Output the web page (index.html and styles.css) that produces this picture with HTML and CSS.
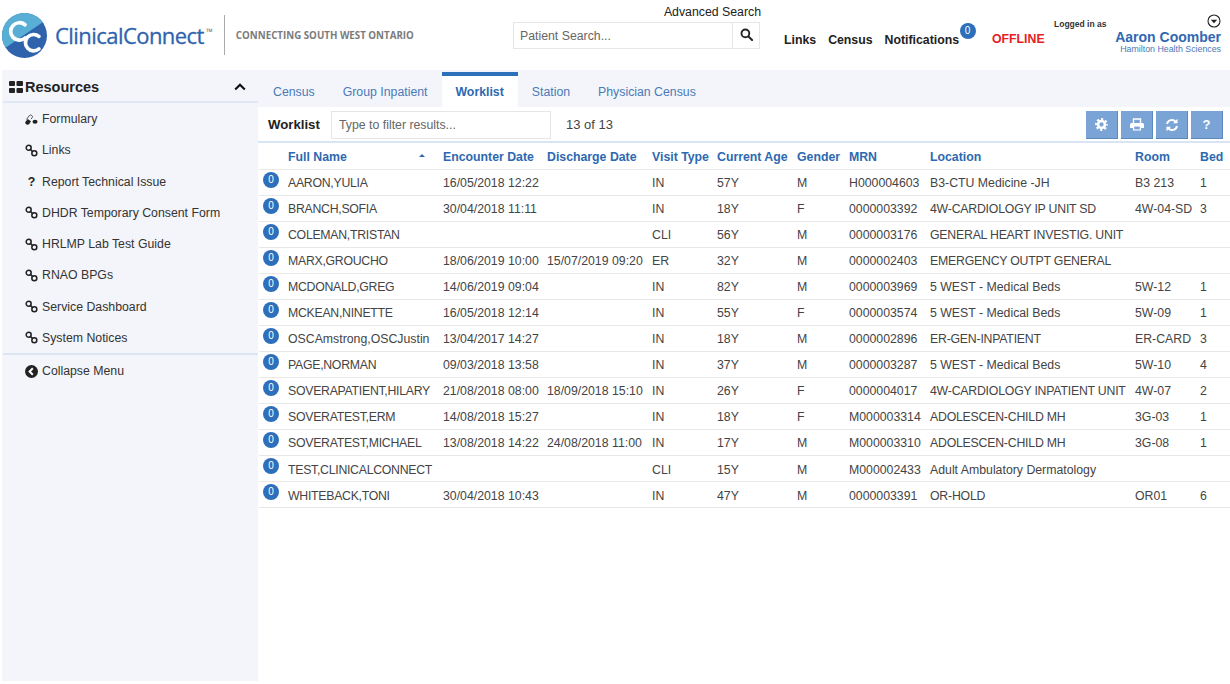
FILE: index.html
```html
<!DOCTYPE html>
<html lang="en">
<head>
    <meta charset="UTF-8">
    <title>ClinicalConnect - Worklist</title>
    <link rel="stylesheet" href="styles.css">
</head>
<body>

<svg class="icon-defs" width="0" height="0">
    <symbol id="i-link" viewBox="0 0 12 12">
        <circle cx="3.4" cy="3.4" r="2.3" fill="none" stroke="currentColor" stroke-width="1.4"/>
        <circle cx="8.6" cy="8.6" r="2.3" fill="none" stroke="currentColor" stroke-width="1.4"/>
        <path d="M4.6 4.6l2.8 2.8" stroke="currentColor" stroke-width="1.4"/>
    </symbol>
</svg>

<header class="top">
    <div class="brand">
        <svg class="logo" viewBox="0 0 44 44" width="45" height="45">
            <defs><clipPath id="logoClip"><circle cx="22" cy="22" r="22"/></clipPath></defs>
            <g clip-path="url(#logoClip)">
                <rect width="44" height="44" fill="#2f64ad"/>
                <path d="M0 0H44V6L2 35H0Z" fill="#58aed4"/>
            </g>
            <path d="M22.5 11.5A8.5 8.5 0 1 0 22.5 24.5" fill="none" stroke="#fff" stroke-width="3.6" stroke-linecap="round"/>
            <path d="M36.100 22.900A8 8 0 1 0 36.100 35.100" fill="none" stroke="#fff" stroke-width="3.6" stroke-linecap="round"/>
        </svg>
        <span class="brand-name">ClinicalConnect<sup>™</sup></span>
        <span class="brand-tag">CONNECTING SOUTH WEST ONTARIO</span>
    </div>
    <div class="search">
        <a class="adv-link">Advanced Search</a>
        <div class="search-row">
            <input class="search-box" type="text" placeholder="Patient Search...">
            <button class="search-btn">
                <svg viewBox="0 0 14 14" width="13" height="13"><circle cx="5.800" cy="5.800" r="4.200" fill="none" stroke="#222" stroke-width="2"/><path d="M9 9l4 4" stroke="#222" stroke-width="2.200" stroke-linecap="round"/></svg>
            </button>
        </div>
    </div>
    <nav class="top-nav">
        <a>Links</a>
        <a>Census</a>
        <a class="notif">Notifications<span class="badge badge-top">0</span></a>
    </nav>
    <div class="offline">OFFLINE</div>
    <div class="user">
        <div class="user-line">
            <span class="logged">Logged in as</span>
            <svg class="user-caret" viewBox="0 0 14 14" width="14" height="14"><circle cx="7" cy="7" r="6" fill="none" stroke="#222" stroke-width="1.100"/><path d="M3.800 5.800h6.400L7 9.200z" fill="#222"/></svg>
        </div>
        <div class="user-name">Aaron Coomber</div>
        <div class="user-org">Hamilton Health Sciences</div>
    </div>
</header>

<div class="layout">
    <aside class="sidebar">
        <div class="side-head">
            <svg viewBox="0 0 14 12" width="14" height="12"><path fill="#222" d="M0 1a1 1 0 0 1 1-1h4a1 1 0 0 1 1 1v3a1 1 0 0 1-1 1H1a1 1 0 0 1-1-1zM7.500 1a1 1 0 0 1 1-1H13a1 1 0 0 1 1 1v3a1 1 0 0 1-1 1H8.500a1 1 0 0 1-1-1zM0 8a1 1 0 0 1 1-1h4a1 1 0 0 1 1 1v3a1 1 0 0 1-1 1H1a1 1 0 0 1-1-1zM7.500 8a1 1 0 0 1 1-1H13a1 1 0 0 1 1 1v3a1 1 0 0 1-1 1H8.500a1 1 0 0 1-1-1z"/></svg>
            <span class="side-title">Resources</span>
            <svg class="side-chevron" viewBox="0 0 12 8" width="12" height="8"><path d="M1.200 6.500L6 1.800l4.800 4.700" fill="none" stroke="#111" stroke-width="2.200"/></svg>
        </div>
        <ul class="side-menu">
            <li><svg class="side-icon" viewBox="0 0 14 12"><path d="M1.500 6L4.700 1.800a1.900 1.900 0 0 1 3 2.300L6.500 5.500" fill="none" stroke="#333" stroke-width=".9"/><path d="M.3 8.600L3 5.500 6.400 8 4.800 10.500a2.500 2.500 0 0 1-4.500-1.900z" fill="#222"/><ellipse cx="10.800" cy="8.400" rx="2.700" ry="2.200" fill="#222"/></svg>Formulary</li>
            <li><svg class="side-icon"><use href="#i-link"/></svg>Links</li>
            <li><span class="side-q">?</span>Report Technical Issue</li>
            <li><svg class="side-icon"><use href="#i-link"/></svg>DHDR Temporary Consent Form</li>
            <li><svg class="side-icon"><use href="#i-link"/></svg>HRLMP Lab Test Guide</li>
            <li><svg class="side-icon"><use href="#i-link"/></svg>RNAO BPGs</li>
            <li><svg class="side-icon"><use href="#i-link"/></svg>Service Dashboard</li>
            <li><svg class="side-icon"><use href="#i-link"/></svg>System Notices</li>
        </ul>
        <div class="side-collapse">
            <svg class="side-icon" viewBox="0 0 13 13"><circle cx="6.500" cy="6.500" r="6.500" fill="#222"/><path d="M7.800 3.300L4.600 6.500l3.200 3.200" fill="none" stroke="#fff" stroke-width="2"/></svg>Collapse Menu
        </div>
    </aside>

    <main class="content">
        <div class="tabs">
            <a class="tab">Census</a>
            <a class="tab">Group Inpatient</a>
            <a class="tab active">Worklist</a>
            <a class="tab">Station</a>
            <a class="tab">Physician Census</a>
        </div>
        <div class="toolbar">
            <strong class="toolbar-title">Worklist</strong>
            <input class="filter" type="text" placeholder="Type to filter results...">
            <span class="count">13 of 13</span>
            <div class="tool-btns">
                <button class="tool-btn"><svg viewBox="0 0 14 14" width="13" height="13"><circle cx="7" cy="7" r="3.700" fill="none" stroke="#fff" stroke-width="2.800"/><circle cx="7" cy="7" r="5.700" fill="none" stroke="#fff" stroke-width="2.400" stroke-dasharray="2.300 2.180" stroke-dashoffset="1.150"/></svg></button>
                <button class="tool-btn"><svg viewBox="0 0 14 13" width="14" height="13"><path d="M3.500 5V1h7v4" fill="none" stroke="#fff" stroke-width="1.400"/><path d="M1.500 5h11A1.500 1.500 0 0 1 14 6.500V10h-3v2.500H3V10H0V6.500A1.500 1.500 0 0 1 1.500 5z" fill="#fff"/><rect x="4.200" y="8.600" width="5.600" height="2.800" fill="#7aa4d6"/></svg></button>
                <button class="tool-btn"><svg viewBox="0 0 14 14" width="14" height="14"><path d="M2 6a5 5 0 0 1 8.600-2.400" fill="none" stroke="#fff" stroke-width="2"/><path d="M12.500.8v4.500H8z" fill="#fff"/><path d="M12 8a5 5 0 0 1-8.600 2.400" fill="none" stroke="#fff" stroke-width="2"/><path d="M1.500 13.200V8.700H6z" fill="#fff"/></svg></button>
                <button class="tool-btn tool-q">?</button>
            </div>
        </div>
        <table class="worklist">
            <colgroup>
                <col class="c-badge"><col class="c-name"><col class="c-enc"><col class="c-dis"><col class="c-visit"><col class="c-age"><col class="c-gender"><col class="c-mrn"><col class="c-loc"><col class="c-room"><col class="c-bed">
            </colgroup>
            <thead>
                <tr>
                    <th></th>
                    <th class="sorted">Full Name<span class="sort-mark"></span></th>
                    <th>Encounter Date</th>
                    <th>Discharge Date</th>
                    <th>Visit Type</th>
                    <th>Current Age</th>
                    <th>Gender</th>
                    <th>MRN</th>
                    <th>Location</th>
                    <th>Room</th>
                    <th>Bed</th>
                </tr>
            </thead>
            <tbody>
                <tr><td><span class="badge">0</span></td><td class="name">AARON,YULIA</td><td>16/05/2018 12:22</td><td></td><td>IN</td><td>57Y</td><td>M</td><td>H000004603</td><td>B3-CTU Medicine -JH</td><td>B3 213</td><td>1</td></tr>
                <tr><td><span class="badge">0</span></td><td class="name">BRANCH,SOFIA</td><td>30/04/2018 11:11</td><td></td><td>IN</td><td>18Y</td><td>F</td><td>0000003392</td><td class="caps">4W-CARDIOLOGY IP UNIT SD</td><td>4W-04-SD</td><td>3</td></tr>
                <tr><td><span class="badge">0</span></td><td class="name">COLEMAN,TRISTAN</td><td></td><td></td><td>CLI</td><td>56Y</td><td>M</td><td>0000003176</td><td class="caps">GENERAL HEART INVESTIG. UNIT</td><td></td><td></td></tr>
                <tr><td><span class="badge">0</span></td><td class="name">MARX,GROUCHO</td><td>18/06/2019 10:00</td><td>15/07/2019 09:20</td><td>ER</td><td>32Y</td><td>M</td><td>0000002403</td><td class="caps">EMERGENCY OUTPT GENERAL</td><td></td><td></td></tr>
                <tr><td><span class="badge">0</span></td><td class="name">MCDONALD,GREG</td><td>14/06/2019 09:04</td><td></td><td>IN</td><td>82Y</td><td>M</td><td>0000003969</td><td>5 WEST - Medical Beds</td><td>5W-12</td><td>1</td></tr>
                <tr><td><span class="badge">0</span></td><td class="name">MCKEAN,NINETTE</td><td>16/05/2018 12:14</td><td></td><td>IN</td><td>55Y</td><td>F</td><td>0000003574</td><td>5 WEST - Medical Beds</td><td>5W-09</td><td>1</td></tr>
                <tr><td><span class="badge">0</span></td><td>OSCAmstrong,OSCJustin</td><td>13/04/2017 14:27</td><td></td><td>IN</td><td>18Y</td><td>M</td><td>0000002896</td><td class="caps">ER-GEN-INPATIENT</td><td>ER-CARD</td><td>3</td></tr>
                <tr><td><span class="badge">0</span></td><td class="name">PAGE,NORMAN</td><td>09/03/2018 13:58</td><td></td><td>IN</td><td>37Y</td><td>M</td><td>0000003287</td><td>5 WEST - Medical Beds</td><td>5W-10</td><td>4</td></tr>
                <tr><td><span class="badge">0</span></td><td class="name">SOVERAPATIENT,HILARY</td><td>21/08/2018 08:00</td><td>18/09/2018 15:10</td><td>IN</td><td>26Y</td><td>F</td><td>0000004017</td><td class="caps">4W-CARDIOLOGY INPATIENT UNIT</td><td>4W-07</td><td>2</td></tr>
                <tr><td><span class="badge">0</span></td><td class="name">SOVERATEST,ERM</td><td>14/08/2018 15:27</td><td></td><td>IN</td><td>18Y</td><td>F</td><td>M000003314</td><td class="caps">ADOLESCEN-CHILD MH</td><td>3G-03</td><td>1</td></tr>
                <tr><td><span class="badge">0</span></td><td class="name">SOVERATEST,MICHAEL</td><td>13/08/2018 14:22</td><td>24/08/2018 11:00</td><td>IN</td><td>17Y</td><td>M</td><td>M000003310</td><td class="caps">ADOLESCEN-CHILD MH</td><td>3G-08</td><td>1</td></tr>
                <tr><td><span class="badge">0</span></td><td class="name">TEST,CLINICALCONNECT</td><td></td><td></td><td>CLI</td><td>15Y</td><td>M</td><td>M000002433</td><td>Adult Ambulatory Dermatology</td><td></td><td></td></tr>
                <tr><td><span class="badge">0</span></td><td class="name">WHITEBACK,TONI</td><td>30/04/2018 10:43</td><td></td><td>IN</td><td>47Y</td><td>M</td><td>0000003391</td><td class="caps">OR-HOLD</td><td>OR01</td><td>6</td></tr>
            </tbody>
        </table>
    </main>
</div>

</body>
</html>
```

FILE: styles.css
```css
* {
    box-sizing: border-box;
}
html, body {
    height: 100%;
}
body {
    margin: 0;
    font-family: "Liberation Sans", Arial, sans-serif;
    font-size: 12.3px;
    color: #444;
    background: #fff;
    overflow: hidden;
}
.icon-defs {
    position: absolute;
}

/* top bar */
.top {
    display: flex;
    height: 70px;
    color: #222;
}
.brand {
    display: flex;
    align-items: center;
    width: 513px;
    padding: 0 0 0 2px;
}
.logo {
    flex: none;
}
.brand-name {
    margin-left: 8px;
    font-family: "Open Sans", sans-serif;
    font-size: 22px;
    letter-spacing: -0.55px;
    -webkit-text-stroke: 0.3px #2f63ad;
    color: #2f63ad;
    white-space: nowrap;
}
.brand-name sup {
    margin-left: 2px;
    font-size: 9px;
    font-weight: 700;
    letter-spacing: 0;
    -webkit-text-stroke: 0;
    vertical-align: 9px;
    color: #777;
}
.brand-tag {
    margin-left: 11px;
    padding: 10px 0 10px 11px;
    border-left: 1px solid #aaa;
    font-family: "Open Sans", sans-serif;
    font-size: 9.75px;
    font-weight: 700;
    color: #7b7b7b;
    white-space: nowrap;
    height: 40px;
    line-height: 22px;
}
.search {
    width: 248px;
    padding-top: 5px;
    text-align: right;
}
.adv-link {
    display: block;
    font-size: 12.3px;
    line-height: 15px;
}
.search-row {
    display: flex;
    margin-top: 2px;
    height: 27px;
}
.search-box {
    width: 220px;
    height: 27px;
    border: 1px solid #e6e6e6;
    padding: 0 6px;
    font: 12.3px "Liberation Sans", Arial, sans-serif;
}
.search-box::placeholder, .filter::placeholder {
    color: #666;
}
.search-btn {
    width: 27px;
    border: 1px solid #e6e6e6;
    border-left: none;
    background: #fff;
    padding: 0;
}
.top-nav {
    display: flex;
    gap: 12px;
    margin-left: 23px;
    padding-top: 33px;
    font-weight: bold;
    font-size: 12.3px;
    width: 208px;
    flex: none;
    white-space: nowrap;
}
.notif {
    position: relative;
}
.badge {
    display: inline-block;
    width: 16px;
    height: 16px;
    border-radius: 50%;
    background: #2d6fba;
    color: #fff;
    font-size: 10px;
    font-weight: normal;
    line-height: 15px;
    text-align: center;
}
.badge-top {
    position: absolute;
    left: 75px;
    top: -10px;
}
.offline {
    width: 62px;
    padding-top: 32px;
    font-weight: bold;
    font-size: 12.3px;
    color: #e8201f;
    flex: none;
}
.user {
    flex: 1;
    padding: 14px 9px 0 0;
    text-align: right;
}
.user-line {
    display: flex;
    justify-content: space-between;
    align-items: flex-start;
    height: 16px;
}
.logged {
    font-size: 8.5px;
    font-weight: bold;
    color: #333;
    padding-top: 5px;
}
.user-name {
    font-size: 14px;
    font-weight: bold;
    color: #2f68b2;
    line-height: 14px;
    white-space: nowrap;
}
.user-org {
    font-size: 8.8px;
    color: #4a78b8;
    line-height: 11px;
    white-space: nowrap;
}

/* sidebar */
.layout {
    display: flex;
    height: 611px;
    padding-left: 2px;
}
.sidebar {
    width: 256px;
    flex: none;
    padding-left: 1px;
    background: #f3f5fa;
    color: #333;
}
.side-head {
    display: flex;
    align-items: center;
    height: 33px;
    padding: 3px 12px 0 6px;
    border-bottom: 2px solid #dfe8f3;
    color: #222;
}
.side-title {
    margin-left: 2px;
    font-size: 14.5px;
    font-weight: bold;
    flex: 1;
}
.side-menu {
    list-style: none;
    margin: 0;
    padding: 0.4px 0 0;
    border-bottom: 2px solid #dbe6f2;
}
.side-menu li {
    display: flex;
    align-items: center;
    height: 31.25px;
    padding-left: 22px;
}
.side-icon {
    width: 13px;
    height: 13px;
    margin-right: 4px;
    flex: none;
    color: #222;
}
.side-q {
    width: 13px;
    margin-right: 4px;
    text-align: center;
    font-weight: bold;
    color: #222;
}
.side-collapse {
    display: flex;
    align-items: center;
    height: 32px;
    padding-left: 22px;
}

/* main column */
.content {
    flex: 1;
    min-width: 0;
}
.tabs {
    display: flex;
    height: 37px;
    padding: 2px 0 0 1px;
    background: #f3f5fa;
}
.tab {
    padding: 0 14px;
    line-height: 40px;
    font-size: 12.3px;
    color: #4a7ab8;
    white-space: nowrap;
}
.tab.active {
    line-height: 32px;
    margin-left: 1px;
    padding-left: 13px;
    background: #fff;
    border-top: 4px solid #2d6fba;
    font-weight: bold;
    color: #2d69b0;
}
.toolbar {
    display: flex;
    align-items: center;
    height: 36px;
    border-bottom: 2px solid #d9e5f3;
    padding: 2px 7px 0 10px;
}
.toolbar-title {
    margin-bottom: 2px;
    font-size: 13.2px;
    color: #222;
    width: 63px;
}
.filter {
    width: 220px;
    height: 28px;
    border: 1px solid #e6e6e6;
    padding: 0 7px;
    font: 12.3px "Liberation Sans", Arial, sans-serif;
}
.count {
    margin: 0 0 2px 15px;
    font-size: 13px;
}
.tool-btns {
    display: flex;
    gap: 3px;
    margin-left: auto;
}
.tool-btn {
    display: flex;
    align-items: center;
    justify-content: center;
    width: 32px;
    height: 28px;
    padding: 0;
    border: none;
    border-right: 1px solid #5d88bd;
    border-bottom: 1px solid #5d88bd;
    background: #7aa4d6;
    color: #fff;
}
.tool-q {
    font: bold 13px "Liberation Sans", Arial, sans-serif;
}

/* table */
.worklist {
    width: 972px;
    margin-left: 1px;
    table-layout: fixed;
    border-collapse: collapse;
    white-space: nowrap;
}
.c-badge { width: 25px; }
.c-name { width: 155px; }
.c-enc { width: 104px; }
.c-dis { width: 105px; }
.c-visit { width: 65px; }
.c-age { width: 80px; }
.c-gender { width: 52px; }
.c-mrn { width: 81px; }
.c-loc { width: 205px; }
.c-room { width: 65px; }
.c-bed { width: 35px; }
.worklist th {
    height: 26px;
    padding: 2px 0 0 4px;
    text-align: left;
    font-weight: bold;
    color: #2d69b0;
    border-bottom: 1px solid #e8e8e8;
}
.worklist td {
    height: 26.05px;
    padding: 2px 0 0 4px;
    border-bottom: 1px solid #e8e8e8;
}
.worklist td:first-child {
    vertical-align: top;
    padding-top: 2px;
}
.worklist td.name {
    letter-spacing: -0.28px;
}
.worklist td.caps {
    letter-spacing: -0.22px;
}
.sorted {
    position: relative;
}
.sort-mark {
    position: absolute;
    right: 14px;
    top: 11px;
    border: 3px solid transparent;
    border-top: none;
    border-bottom: 3px solid #2d69b0;
}
```
